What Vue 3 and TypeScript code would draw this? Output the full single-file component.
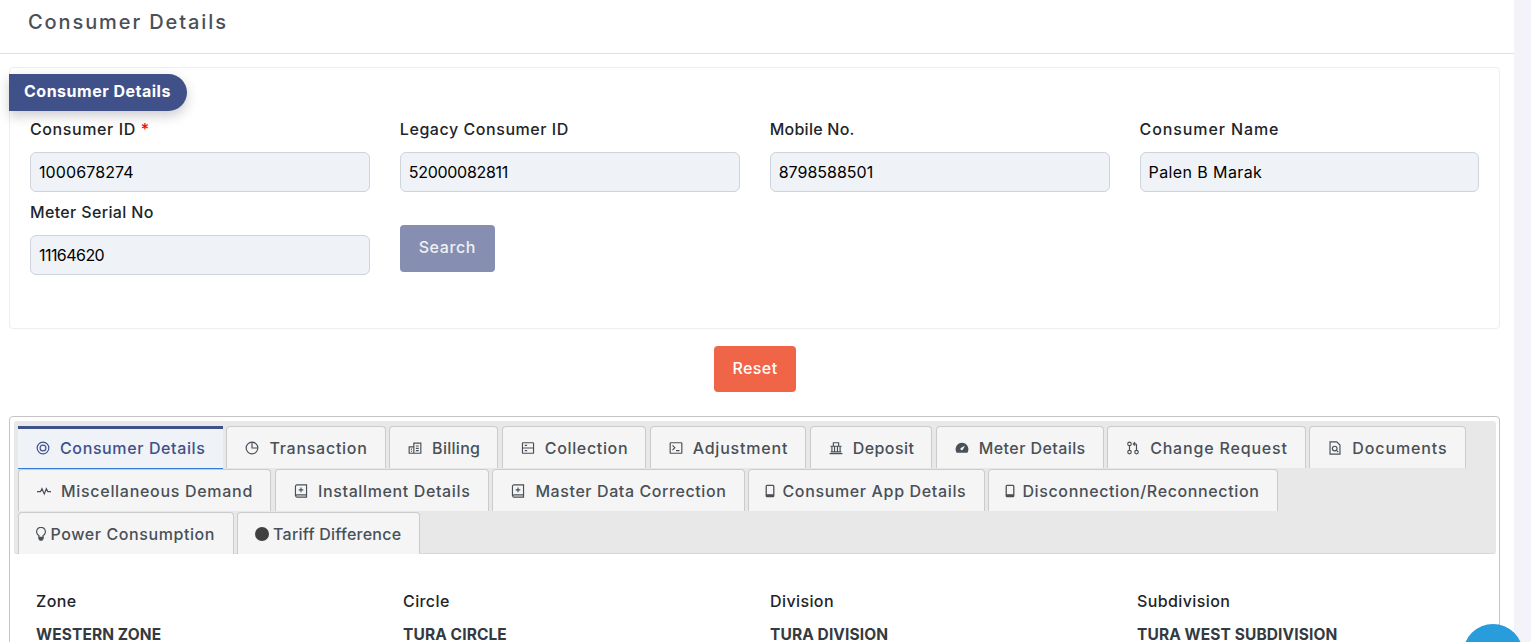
<script setup lang="ts">
interface Field { label: string; value: string; required?: boolean; labelLs: number; valueLs: number }
const fields: Field[] = [
  { label: 'Consumer ID', value: '1000678274', required: true, labelLs: 0.6, valueLs: 0.1 },
  { label: 'Legacy Consumer ID', value: '52000082811', labelLs: 0.55, valueLs: -0.3 },
  { label: 'Mobile No.', value: '8798588501', labelLs: 0.25, valueLs: 0 },
  { label: 'Consumer Name', value: 'Palen B Marak', labelLs: 0.9, valueLs: 0.4 },
  { label: 'Meter Serial No', value: '11164620', labelLs: 0.35, valueLs: -0.55 },
]
interface Tab { label: string; icon: string; ls: number; kind?: string }
const rows: Tab[][] = [
  [
    { label: 'Consumer Details', icon: 'focus', ls: 0.62 },
    { label: 'Transaction', icon: 'pie', ls: 0.73 },
    { label: 'Billing', icon: 'building', ls: 0.29 },
    { label: 'Collection', icon: 'layout', ls: 0.65 },
    { label: 'Adjustment', icon: 'terminal', ls: 0.8 },
    { label: 'Deposit', icon: 'bank', ls: 0.43 },
    { label: 'Meter Details', icon: 'gauge', ls: 0.42 },
    { label: 'Change Request', icon: 'pull', ls: 0.82 },
    { label: 'Documents', icon: 'doc', ls: 0.89 },
  ],
  [
    { label: 'Miscellaneous Demand', icon: 'pulse', ls: 0.7 },
    { label: 'Installment Details', icon: 'book', ls: 0.63 },
    { label: 'Master Data Correction', icon: 'book', ls: 0.59 },
    { label: 'Consumer App Details', icon: 'phone', ls: 0.65, kind: 'k-phone' },
    { label: 'Disconnection/Reconnection', icon: 'phone', ls: 0.63, kind: 'k-phone' },
  ],
  [
    { label: 'Power Consumption', icon: 'bulb', ls: 0.59, kind: 'k-bulb' },
    { label: 'Tariff Difference', icon: 'dot', ls: 0.24, kind: 'k-dot' },
  ],
]
const info = [
  { k: 'Zone', v: 'WESTERN ZONE' },
  { k: 'Circle', v: 'TURA CIRCLE' },
  { k: 'Division', v: 'TURA DIVISION' },
  { k: 'Subdivision', v: 'TURA WEST SUBDIVISION' },
]
</script>

<template>
  <div class="page">
    <main class="content">
      <header class="topbar"><h1>Consumer Details</h1></header>
      <section class="card">
        <div class="pill">Consumer Details</div>
        <div class="form">
          <div v-for="f in fields" :key="f.label" class="field">
            <label :style="{ letterSpacing: f.labelLs + 'px' }">{{ f.label }} <span v-if="f.required" class="req">*</span></label>
            <div class="input" :style="{ letterSpacing: f.valueLs + 'px' }">{{ f.value }}</div>
          </div>
          <div class="search-cell"><button class="search">Search</button></div>
        </div>
      </section>
      <div class="reset-row"><button class="reset">Reset</button></div>
      <section class="tabs-card">
        <div class="tabbar">
          <div v-for="(row, ri) in rows" :key="ri" class="tabrow">
            <div
              v-for="(t, ti) in row"
              :key="t.label"
              class="tab"
              :class="[{ active: ri === 0 && ti === 0 }, t.kind]"
            >
              <svg class="ic" viewBox="0 0 24 24" fill="none" stroke="currentColor" stroke-width="2">
                <template v-if="t.icon === 'focus'">
                  <circle cx="12" cy="12" r="10" /><circle cx="12" cy="12" r="5" />
                </template>
                <template v-else-if="t.icon === 'pie'">
                  <circle cx="12" cy="12" r="10" /><path d="M12 2v10h10" />
                </template>
                <template v-else-if="t.icon === 'building'">
                  <path d="M2 21V10h8v11zM10 21V3.500h12V21z" /><path d="M13.500 8.500h5M13.500 12.500h5M13.500 16.500h5M5 14h2M5 17.500h2" />
                </template>
                <template v-else-if="t.icon === 'layout'">
                  <rect x="2.500" y="3" width="19" height="18" rx="1" /><path d="M2.500 12h19M6.500 7.500h4M6.500 16.500h4" />
                </template>
                <template v-else-if="t.icon === 'terminal'">
                  <rect x="2" y="3" width="20" height="18" rx="1" /><path d="M6 7.500l4 4-4 4M12 16.500h6" />
                </template>
                <template v-else-if="t.icon === 'bank'">
                  <path d="M1 21.500h22M3 18.500h18M5 18.500V9M9.500 18.500V9M14.500 18.500V9M19 18.500V9M2.500 9h19M7.500 9V3h9v6" />
                </template>
                <template v-else-if="t.icon === 'gauge'">
                  <path
                    d="M12 3a11 11 0 0 0-10 15.500l.7 1.500h18.600l.7-1.500A11 11 0 0 0 12 3zm5 5l-3.400 6.600a2.200 2.200 0 1 1-3-3z"
                    fill="currentColor"
                    stroke="none"
                    fill-rule="evenodd"
                  />
                </template>
                <template v-else-if="t.icon === 'pull'">
                  <circle cx="6" cy="5" r="3" /><circle cx="6" cy="19" r="3" /><circle cx="18" cy="19" r="3" />
                  <path d="M6 8v8M18 16V7a2 2 0 0 0-2-2h-3M15.500 2l-3 3 3 3" />
                </template>
                <template v-else-if="t.icon === 'doc'">
                  <path d="M15 1.500H3.500v21h17V7z" /><circle cx="11.500" cy="13" r="4" /><path d="M14.500 16l3 3" />
                </template>
                <template v-else-if="t.icon === 'pulse'">
                  <path d="M0 13h6l2.500-5 4 9 3.500-9 2.500 5H24" />
                </template>
                <template v-else-if="t.icon === 'book'">
                  <path d="M21.500 18.500H5a2 2 0 0 0 0 4h16.500V1.500H5a2.500 2.500 0 0 0-2.500 2.500V20.500" /><path d="M12 6v8M8 10h8" />
                </template>
                <template v-else-if="t.icon === 'phone'">
                  <rect x="5.500" y="2.500" width="13" height="19" rx="1.500" stroke-width="2.200" />
                  <rect x="5.500" y="17.500" width="13" height="4" fill="currentColor" stroke="none" />
                </template>
                <template v-else-if="t.icon === 'bulb'">
                  <path d="M8.500 18v-3.300a7.500 7.500 0 1 1 7 0V18z" />
                  <path d="M7.500 16.500h9v4l-2.500 3h-4l-2.500-3z" fill="currentColor" stroke="none" />
                </template>
                <template v-else>
                  <circle cx="12" cy="12" r="12" fill="currentColor" stroke="none" />
                </template>
              </svg>
              <span :style="{ letterSpacing: t.ls + 'px' }">{{ t.label }}</span>
            </div>
          </div>
        </div>
        <div class="info">
          <div v-for="i in info" :key="i.k" class="info-cell">
            <div class="info-k">{{ i.k }}</div>
            <div class="info-v">{{ i.v }}</div>
          </div>
        </div>
      </section>
    </main>
    <div class="fab"></div>
  </div>
</template>

<style>
html, body { margin: 0; height: 100%; overflow: hidden; background: #f3f3f9; }
</style>

<style scoped>
.page {
  height: 642px;
  overflow: hidden;
  position: relative;
  font-family: Inter, "Open Sans", sans-serif;
  background: #f3f3f9;
}
.content { width: 1514px; height: 642px; background: #fff; overflow: hidden; }
.topbar { height: 43px; border-bottom: 1px solid #dfe1e4; display: flex; align-items: center; padding: 0 28px 10px; }
.topbar h1 { margin: 0; font-size: 20px; font-weight: 500; letter-spacing: 1.9px; color: #495057; }
.card {
  margin: 13px 14px 0 9px;
  height: 262px;
  box-sizing: border-box;
  border: 1px solid #eceef0;
  border-radius: 4px;
  position: relative;
  padding: 51px 20px 0;
}
.pill {
  position: absolute;
  left: -1px;
  top: 6px;
  width: 178px;
  height: 37px;
  box-sizing: border-box;
  padding-left: 15px;
  line-height: 34px;
  background: #405189;
  color: #fff;
  font-weight: 700;
  font-size: 16px;
  letter-spacing: 0.5px;
  border-radius: 0 20px 20px 0;
  box-shadow: 0 5px 12px rgba(60, 60, 80, 0.25);
}
.form { display: grid; grid-template-columns: repeat(4, 339.85px); column-gap: 30px; row-gap: 10px; }
.field label { display: block; font-size: 16px; line-height: 20px; margin: 0 0 13px; color: #212529; font-weight: 450; }
.req { color: #f00; }
.input {
  height: 40px;
  box-sizing: border-box;
  border: 1px solid #ced4da;
  border-radius: 6px;
  background: #eff2f7;
  padding: 0 8px;
  line-height: 38px;
  font-size: 16px;
  color: #000;
}
.search-cell { padding-top: 23px; }
.search {
  width: 95px; height: 47px; border: 0; border-radius: 4px; padding: 0 0 3px;
  background: #868fb1; color: #eef0f5; font: inherit; font-size: 16px; letter-spacing: 0.6px; font-weight: 450;
}
.reset-row { display: flex; justify-content: center; margin: 17px 4px 0 0; }
.reset {
  width: 82px; height: 46px; border: 0; border-radius: 4px; padding: 0 0 2px;
  background: #f06548; color: #fff; font: inherit; font-size: 16px; letter-spacing: 0.4px; font-weight: 450;
}
.tabs-card {
  margin: 24px 14px 0 9px;
  height: 400px;
  box-sizing: border-box;
  border: 1px solid #c4c4c4;
  border-radius: 4px;
  padding: 4px 3px 4px 4px;
}
.tabbar {
  background: #e8e8e8;
  border-bottom: 1px solid #d8d8d8;
  border-radius: 3px;
  padding: 5px 0 0 4px;
  height: 133px;
  box-sizing: border-box;
}
.tabrow { display: flex; gap: 3.5px; height: 43px; }
.tab {
  height: 42px;
  box-sizing: border-box;
  display: flex;
  align-items: center;
  gap: 10px;
  padding: 0 17.5px 0 18px;
  background: #f5f5f5;
  border: 1px solid #cbcbcb;
  border-bottom: 0;
  border-radius: 4px 4px 0 0;
  color: #495057;
  font-size: 16px;
  font-weight: 450;
  white-space: nowrap;
}
.tabrow:first-child .tab { padding-right: 17px; }
.tabrow:first-child .tab.active {
  background: #eff2f7;
  color: #405189;
  border: 0;
  border-top: 3px solid #405189;
  border-bottom: 1px solid #2f7fd6;
  border-radius: 0;
  height: 43px;
  padding: 0 17.5px 2px 18px;
}
.ic { width: 14px; height: 14px; flex: none; }
.k-phone { gap: 5px; }
.k-phone .ic { margin-left: -4px; }
.k-bulb { gap: 2.5px; }
.k-bulb .ic { margin-left: -3px; }
.k-dot { gap: 4px; }
.k-dot .ic { margin-left: -1px; color: #404040; }
.info { display: grid; grid-template-columns: repeat(4, 367px); padding: 37px 0 0 22px; }
.info-k { font-size: 16px; letter-spacing: 0.4px; line-height: 20px; color: #212529; font-weight: 450; }
.info-v { font-size: 15.5px; letter-spacing: 0.1px; line-height: 20px; margin-top: 14px; font-weight: 700; color: #343a40; }
.fab {
  position: absolute;
  left: 1463px;
  top: 624px;
  width: 60px;
  height: 60px;
  border-radius: 50%;
  background: #299cdb;
}
</style>
